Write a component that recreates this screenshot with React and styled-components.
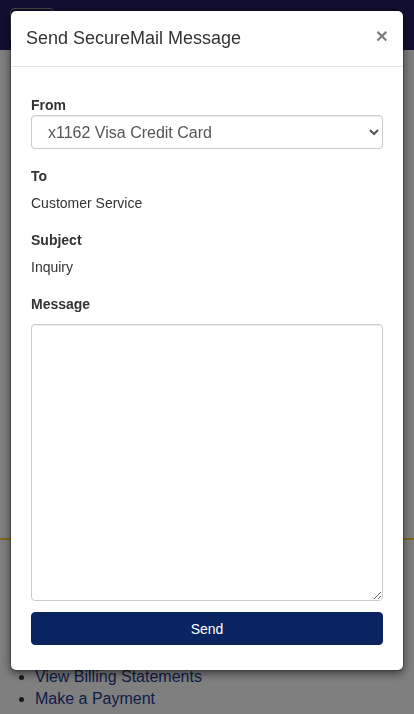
import React from 'react';
import styled, { createGlobalStyle } from 'styled-components';

const GlobalStyle = createGlobalStyle`
  * {
    box-sizing: border-box;
  }

  body {
    margin: 0;
    font-family: "Liberation Sans", Arial, sans-serif;
    font-size: 14px;
    line-height: 1.42857;
    color: #333;
    background: #fff;
  }
`;

const Page = styled.div`
  min-height: 100vh;
  background: #fff;
`;

const Navbar = styled.header`
  height: 50px;
  background: #221f62;
  display: flex;
  align-items: flex-start;
  padding: 8px 10px;
`;

const NavToggle = styled.button`
  width: 44px;
  height: 34px;
  border: 1px solid #888;
  border-radius: 4px;
  background: transparent;
`;

const Hero = styled.section`
  height: 488px;
`;

const Divider = styled.hr`
  margin: 0;
  border: 0;
  border-top: 2px solid #ffcf3a;
`;

const LinkList = styled.ul`
  margin: 126px 0 0;
  padding-left: 35px;
  font-size: 16px;
`;

const LinkItem = styled.li`
  line-height: 22px;

  a {
    color: #1e3a8e;
    text-decoration: none;
  }
`;

const Backdrop = styled.div`
  position: fixed;
  inset: 0;
  background: rgba(0, 0, 0, 0.5);
`;

const ModalWrap = styled.div`
  position: fixed;
  top: 0;
  left: 0;
  right: 0;
  padding: 10px;
`;

const ModalContent = styled.div`
  background: #fff;
  border: 1px solid rgba(0, 0, 0, 0.2);
  border-radius: 6px;
  box-shadow: 0 3px 9px rgba(0, 0, 0, 0.5);
  background-clip: padding-box;
`;

const ModalHeader = styled.div`
  display: flex;
  justify-content: space-between;
  align-items: flex-start;
  padding: 15px;
  border-bottom: 1px solid #e5e5e5;
`;

const ModalTitle = styled.h4`
  margin: 0;
  font-size: 18px;
  font-weight: normal;
  line-height: 25px;
  color: #333;
`;

const CloseButton = styled.button`
  margin-top: -1px;
  padding: 0;
  border: 0;
  background: transparent;
  font-family: "Liberation Sans", Arial, sans-serif;
  font-size: 21px;
  font-weight: bold;
  line-height: 1;
  color: #000;
  opacity: 0.5;
  cursor: pointer;
`;

const ModalBody = styled.div`
  padding: 28px 20px 25px;
  display: flex;
  flex-direction: column;
`;

const Field = styled.div`
  display: flex;
  flex-direction: column;
  margin-bottom: ${(p) => p.$gap}px;
`;

const Label = styled.label`
  font-weight: bold;
  line-height: 20px;
  margin-bottom: ${(p) => p.$space || 0}px;
`;

const Value = styled.div`
  line-height: 20px;
  color: #333;
`;

const Select = styled.select`
  height: 34px;
  width: 100%;
  padding: 6px 12px;
  font-family: "Liberation Sans", Arial, sans-serif;
  font-size: 16px;
  color: #555;
  background: #fff;
  border: 1px solid #ccc;
  border-radius: 4px;
  box-shadow: inset 0 1px 1px rgba(0, 0, 0, 0.075);
`;

const TextArea = styled.textarea`
  height: 277px;
  width: 100%;
  padding: 6px 12px;
  font-family: "Liberation Sans", Arial, sans-serif;
  font-size: 14px;
  color: #555;
  border: 1px solid #ccc;
  border-radius: 4px;
  box-shadow: inset 0 1px 1px rgba(0, 0, 0, 0.075);
`;

const SendButton = styled.button`
  height: 33px;
  width: 100%;
  border: 1px solid #0a2460;
  border-radius: 4px;
  background: #0a2461;
  color: #fff;
  font-family: "Liberation Sans", Arial, sans-serif;
  font-size: 14px;
  cursor: pointer;
`;

export default function App() {
  return (
    <>
      <GlobalStyle />
      <Page>
        <Navbar>
          <NavToggle aria-label="Menu" />
        </Navbar>
        <Hero />
        <Divider />
        <LinkList>
          <LinkItem><a href="#">View Billing Statements</a></LinkItem>
          <LinkItem><a href="#">Make a Payment</a></LinkItem>
        </LinkList>
      </Page>

      <Backdrop />
      <ModalWrap>
        <ModalContent>
          <ModalHeader>
            <ModalTitle>Send SecureMail Message</ModalTitle>
            <CloseButton aria-label="Close">×</CloseButton>
          </ModalHeader>
          <ModalBody>
            <Field $gap={17}>
              <Label>From</Label>
              <Select defaultValue="1162">
                <option value="1162">x1162 Visa Credit Card</option>
              </Select>
            </Field>
            <Field $gap={17}>
              <Label $space={7}>To</Label>
              <Value>Customer Service</Value>
            </Field>
            <Field $gap={17}>
              <Label $space={7}>Subject</Label>
              <Value>Inquiry</Value>
            </Field>
            <Field $gap={11}>
              <Label $space={10}>Message</Label>
              <TextArea />
            </Field>
            <SendButton>Send</SendButton>
          </ModalBody>
        </ModalContent>
      </ModalWrap>
    </>
  );
}
